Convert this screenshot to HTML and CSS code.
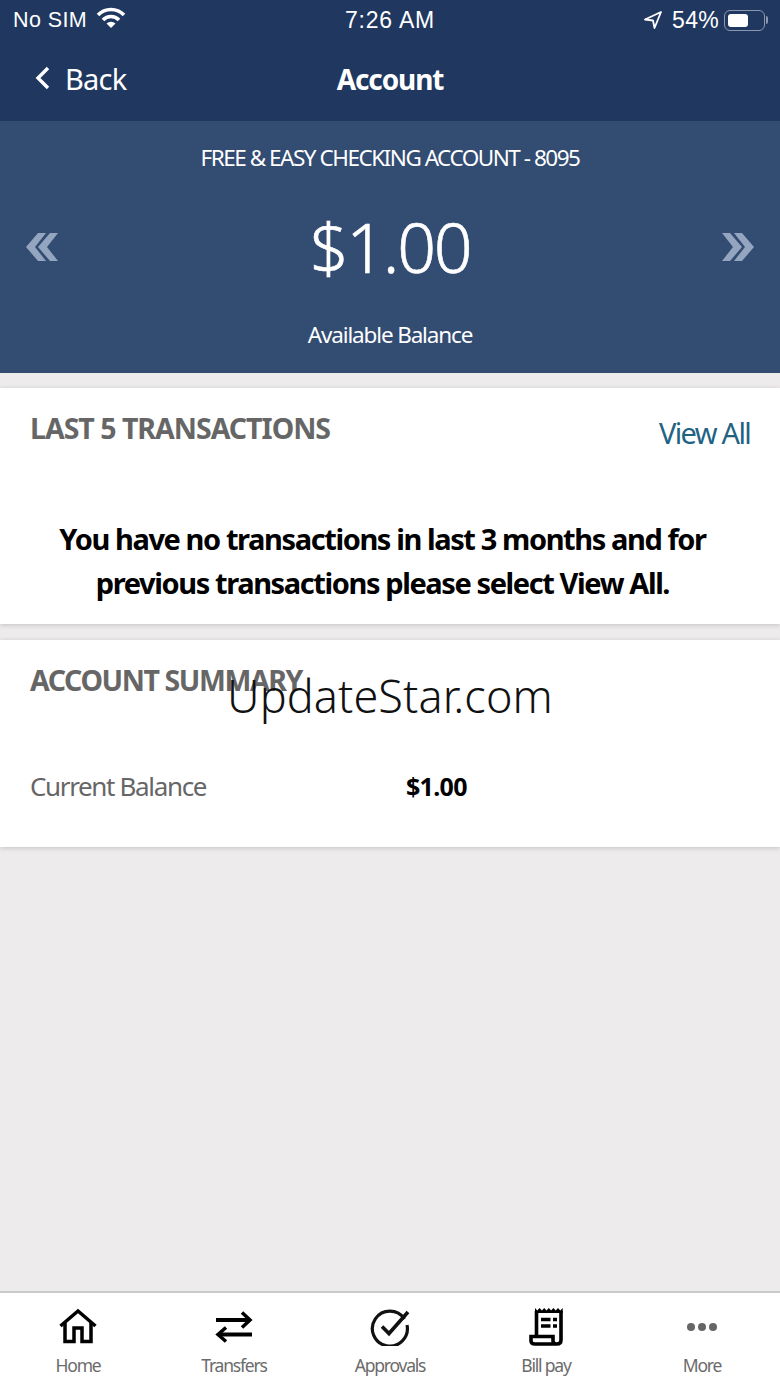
FILE: index.html
```html
<!DOCTYPE html>
<html lang="en">
<head>
    <meta charset="UTF-8">
    <meta name="viewport" content="width=device-width, initial-scale=1.0">
    <title>Account</title>
    <link rel="stylesheet" href="styles.css">
</head>
<body>
<div id="app">
    <header class="top">
        <div class="status">
            <div class="status-left">
                <span>No SIM</span>
                <svg class="wifi" width="30" height="22" viewBox="0 0 30 22">
                    <path d="M2 8 A18 18 0 0 1 28 8" fill="none" stroke="#fff" stroke-width="3.6"/>
                    <path d="M7 13 A11 11 0 0 1 23 13" fill="none" stroke="#fff" stroke-width="3.6"/>
                    <path d="M15 21 L10.5 16.5 A6.5 6.5 0 0 1 19.5 16.5 Z" fill="#fff"/>
                </svg>
            </div>
            <div class="status-time">7:26 AM</div>
            <div class="status-right">
                <svg width="20" height="20" viewBox="0 0 20 20">
                    <path d="M18 2 L2 9.500 L10 10.500 L11.500 18 Z" fill="none" stroke="#fff" stroke-width="1.800" stroke-linejoin="round"/>
                </svg>
                <span>54%</span>
                <div class="battery"><div class="battery-fill"></div></div>
                <div class="battery-tip"></div>
            </div>
        </div>
        <div class="nav">
            <div class="back">
                <svg width="18" height="26" viewBox="0 0 18 26">
                    <path d="M14 3 L4 13 L14 23" fill="none" stroke="#fff" stroke-width="3.400"/>
                </svg>
                <span>Back</span>
            </div>
            <div class="nav-title">Account</div>
        </div>
    </header>

    <section class="hero">
        <div class="hero-name">FREE &amp; EASY CHECKING ACCOUNT - 8095</div>
        <div class="hero-row">
            <svg width="34" height="28" viewBox="0 0 34 28">
                <path d="M13 0 H21 L10 14 L21 28 H13 L1 14 Z M25 0 H33 L22 14 L33 28 H25 L13 14 Z" fill="#94a5bf"/>
            </svg>
            <div class="hero-amount">$1.00</div>
            <svg width="34" height="28" viewBox="0 0 34 28">
                <path d="M21 0 H13 L24 14 L13 28 H21 L33 14 Z M9 0 H1 L12 14 L1 28 H9 L21 14 Z" fill="#94a5bf"/>
            </svg>
        </div>
        <div class="hero-label">Available Balance</div>
    </section>

    <section class="card card-tx">
        <div class="card-head">
            <h2>LAST 5 TRANSACTIONS</h2>
            <a class="view-all">View All</a>
        </div>
        <p class="empty">You have no transactions in last 3 months and for<br>previous transactions please select View All.</p>
    </section>

    <section class="card card-summary">
        <h2>ACCOUNT SUMMARY</h2>
        <div class="summary-row">
            <span class="summary-label">Current Balance</span>
            <span class="summary-value">$1.00</span>
        </div>
    </section>

    <div class="watermark">UpdateStar.com</div>

    <nav class="tabs">
        <div class="tab">
            <svg width="38" height="36" viewBox="0 0 38 36">
                <path d="M1.500 17 L19 2 L36.500 17" fill="none" stroke="#000" stroke-width="3.500"/>
                <path d="M6 14 V32.500 H15 V19 H23 V32.500 H32 V14" fill="none" stroke="#000" stroke-width="3.500"/>
            </svg>
            <span>Home</span>
        </div>
        <div class="tab">
            <svg width="38" height="36" viewBox="0 0 38 36">
                <path d="M1 11 H33" fill="none" stroke="#000" stroke-width="4"/>
                <path d="M27 3.500 L35 11 L27 18.500" fill="none" stroke="#000" stroke-width="3.500"/>
                <path d="M37 25.500 H5" fill="none" stroke="#000" stroke-width="4"/>
                <path d="M11 18.500 L3 25.500 L11 32.500" fill="none" stroke="#000" stroke-width="3.500"/>
            </svg>
            <span>Transfers</span>
        </div>
        <div class="tab">
            <svg width="40" height="38" viewBox="0 0 40 38">
                <path d="M34.500 11 A17.500 17.500 0 1 0 37 17" fill="none" stroke="#111" stroke-width="3.200"/>
                <path d="M12 18.500 L19 25.500 L38 4" fill="none" stroke="#111" stroke-width="3.600"/>
            </svg>
            <span>Approvals</span>
        </div>
        <div class="tab">
            <svg width="38" height="38" viewBox="0 0 38 38">
                <path d="M8 0 l2.300 2.500 2.300-2.500 2.300 2.500 2.300-2.500 2.300 2.500 2.300-2.500 2.300 2.500 2.300-2.500 2.300 2.500 2.300-2.500 2.300 2.500 2.400-2.500 V5 H8 Z" fill="#000"/>
                <path d="M9.500 3 V28 M34 3 V32 Q34 36 30 36 H8 Q4 36 4 33 V28.500 H26 V33 Q26 36 30 36" fill="none" stroke="#000" stroke-width="3.600"/>
                <path d="M14 11.500 H23.500 M14 18 H23.500" fill="none" stroke="#000" stroke-width="3.400"/>
                <path d="M26 11.500 H30 M26 18 H30" fill="none" stroke="#000" stroke-width="3.400"/>
            </svg>
            <span>Bill pay</span>
        </div>
        <div class="tab">
            <div class="dots"><i></i><i></i><i></i></div>
            <span>More</span>
        </div>
    </nav>
</div>
</body>
</html>
```

FILE: styles.css
```css
* {
    box-sizing: border-box;
}
html, body {
    margin: 0;
    padding: 0;
}
body {
    font-family: "Noto Sans", "Open Sans", sans-serif;
    background-color: #edebec;
}
#app {
    position: relative;
    width: 780px;
    height: 1387px;
    display: flex;
    flex-direction: column;
    overflow: hidden;
}
.top {
    height: 121px;
    background-color: #20375f;
    color: white;
    flex: none;
}
.status {
    height: 40px;
    padding: 0 12px 0 13px;
    display: flex;
    align-items: center;
    justify-content: space-between;
    font-family: "Liberation Sans", sans-serif;
    font-size: 21.500px;
    position: relative;
}
.status-left {
    display: flex;
    align-items: center;
    gap: 9px;
}
.status-left span {
    letter-spacing: 0.4px;
}
.wifi {
    margin-top: -4px;
}
.status-time {
    position: absolute;
    left: 0;
    right: 0;
    text-align: center;
    font-size: 23px;
    letter-spacing: 0.8px;
    pointer-events: none;
}
.status-right {
    display: flex;
    align-items: center;
}
.status-right span {
    margin-left: 9px;
    font-size: 23px;
    letter-spacing: 0.3px;
}
.battery {
    width: 41px;
    height: 21px;
    margin-left: 5px;
    padding: 3px;
    border: 1.500px solid #8a97ae;
    border-radius: 6px;
}
.battery-fill {
    width: 20px;
    height: 100%;
    background-color: white;
    border-radius: 3px;
}
.battery-tip {
    width: 2px;
    height: 8px;
    margin-left: 1px;
    background-color: #8a97ae;
    border-radius: 0 2px 2px 0;
}
.nav {
    height: 78px;
    position: relative;
    display: flex;
    align-items: center;
    padding-left: 34px;
}
.back {
    display: flex;
    align-items: center;
    gap: 13px;
    font-size: 29px;
    letter-spacing: -0.8px;
    margin-top: -2px;
}
.nav-title {
    position: absolute;
    left: 0;
    right: 0;
    text-align: center;
    font-size: 28px;
    font-weight: 700;
    letter-spacing: -1.1px;
}
.hero {
    height: 252px;
    background-color: #334c72;
    color: white;
    flex: none;
    display: flex;
    flex-direction: column;
    align-items: center;
}
.hero-name {
    margin-top: 20px;
    font-size: 22.500px;
    line-height: 34px;
    letter-spacing: -1.48px;
}
.hero-row {
    width: 100%;
    margin-top: 30px;
    padding: 0 25px;
    height: 84px;
    display: flex;
    align-items: center;
    justify-content: space-between;
}
.hero-amount {
    font-size: 68px;
    font-weight: 300;
    line-height: 84px;
    letter-spacing: -2.3px;
    -webkit-text-stroke: 0.6px white;
}
.hero-label {
    margin-top: 29px;
    font-size: 22.500px;
    line-height: 34px;
    letter-spacing: -1.15px;
}
.card {
    background-color: white;
    flex: none;
    box-shadow: 0 1px 5px rgba(0, 0, 0, 0.18);
}
.card h2 {
    margin: 0;
    font-size: 28.500px;
    font-weight: 700;
    line-height: 40px;
    color: #666666;
    letter-spacing: -1.4px;
}
.card-tx {
    height: 236px;
    margin-top: 15px;
    padding: 20px 30px 0 31px;
}
.card-tx h2 {
    letter-spacing: -1px;
    margin-left: -1px;
}
.card-head {
    display: flex;
    justify-content: space-between;
}
.view-all {
    margin-top: 5px;
    font-size: 29px;
    line-height: 40px;
    color: #1f6384;
    letter-spacing: -1.7px;
}
.empty {
    margin: 64px 16px 0 0;
    text-align: center;
    font-size: 29px;
    line-height: 44px;
    font-weight: 700;
    color: black;
    letter-spacing: -1.4px;
}
.card-summary {
    height: 207px;
    margin-top: 16px;
    padding: 20px 30px 0 30px;
}
.summary-row {
    display: flex;
    align-items: center;
    padding-top: 66px;
}
.summary-label {
    width: 376px;
    font-size: 26px;
    line-height: 40px;
    color: #666666;
    letter-spacing: -1.35px;
}
.summary-value {
    font-size: 25px;
    line-height: 40px;
    font-weight: 700;
    color: black;
    letter-spacing: -0.7px;
}
.watermark {
    position: absolute;
    left: 0;
    right: 0;
    top: 666px;
    text-align: center;
    font-size: 45px;
    font-weight: 300;
    line-height: 60px;
    color: #111111;
    letter-spacing: 0.1px;
}
.tabs {
    margin-top: auto;
    height: 96px;
    background-color: white;
    border-top: 2px solid #c9c9c9;
    display: flex;
    flex: none;
}
.tab {
    flex: 1;
    display: flex;
    flex-direction: column;
    align-items: center;
    padding-top: 15px;
    font-size: 17.500px;
    color: #6b6b6b;
    letter-spacing: -1.2px;
}
.tab svg {
    height: 38px;
}
.tab span {
    margin-top: 6px;
    line-height: 26px;
}
.dots {
    height: 38px;
    display: flex;
    align-items: center;
    gap: 3px;
}
.dots i {
    width: 8px;
    height: 8px;
    border-radius: 50%;
    background-color: #666666;
}
```
